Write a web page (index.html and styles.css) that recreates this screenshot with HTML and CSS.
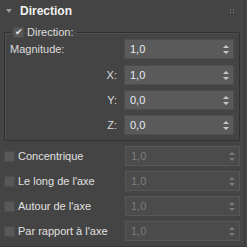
FILE: index.html
```html
<!DOCTYPE html>
<html lang="fr">
<head>
    <meta charset="UTF-8">
    <title>Direction</title>
    <link rel="stylesheet" href="styles.css">
</head>
<body>

<div class="rollout">
    <div class="head">
        <span class="caret"></span>
        <span class="title">Direction</span>
        <span class="grip"></span>
    </div>

    <fieldset class="group">
        <legend><label class="check on"><span class="box">&#10004;</span>Direction:</label></legend>

        <div class="row">
            <span class="lbl">Magnitude:</span>
            <div class="spin"><span class="val">1,0</span><span class="arrows"></span></div>
        </div>
        <div class="row">
            <span class="lbl axis">X:</span>
            <div class="spin"><span class="val">1,0</span><span class="arrows"></span></div>
        </div>
        <div class="row">
            <span class="lbl axis">Y:</span>
            <div class="spin"><span class="val">0,0</span><span class="arrows"></span></div>
        </div>
        <div class="row">
            <span class="lbl axis">Z:</span>
            <div class="spin"><span class="val">0,0</span><span class="arrows"></span></div>
        </div>
    </fieldset>

    <div class="list">
        <div class="row">
            <label class="check"><span class="box"></span>Concentrique</label>
            <div class="spin off"><span class="val">1,0</span><span class="arrows"></span></div>
        </div>
        <div class="row">
            <label class="check"><span class="box"></span>Le long de l'axe</label>
            <div class="spin off"><span class="val">1,0</span><span class="arrows"></span></div>
        </div>
        <div class="row">
            <label class="check"><span class="box"></span>Autour de l'axe</label>
            <div class="spin off"><span class="val">1,0</span><span class="arrows"></span></div>
        </div>
        <div class="row">
            <label class="check"><span class="box"></span>Par rapport à l'axe</label>
            <div class="spin off"><span class="val">1,0</span><span class="arrows"></span></div>
        </div>
    </div>
</div>

</body>
</html>
```

FILE: styles.css
```css
body {
    margin: 0;
    background: #444444;
    font-family: "Liberation Sans", Arial, sans-serif;
    font-size: 11px;
    color: #dcdcdc;
}
.rollout {
    width: 244px;
    height: 246px;
    border-right: 1px solid #383838;
    border-bottom: 1px solid #383838;
}
.head {
    height: 21px;
    display: flex;
    align-items: center;
    padding-left: 6px;
}
.caret {
    width: 0;
    height: 0;
    border-left: 3px solid transparent;
    border-right: 3px solid transparent;
    border-top: 4px solid #9a9a9a;
    margin-right: 8px;
}
.title {
    font-weight: bold;
    font-size: 12px;
    color: #f0f0f0;
    flex: 1;
}
.grip {
    width: 6px;
    height: 6px;
    margin-right: 9px;
    background-image: radial-gradient(circle, #8a8a8a 0.8px, transparent 1px);
    background-size: 3px 3px;
}
.group {
    margin: 5px 4px 0 4px;
    padding: 1px 5px 5px 5px;
    border: 1px solid #303030;
    box-shadow: inset 1px 1px 0 #505050;
    border-radius: 2px;
}
.group legend {
    padding: 0 4px 0 2px;
    margin-left: 1px;
}
.check {
    display: flex;
    align-items: center;
    gap: 3px;
}
.box {
    width: 11px;
    height: 11px;
    box-sizing: border-box;
    background: #585858;
    border: 1px solid #4c4c4c;
    color: #e8e8e8;
    font-size: 9px;
    line-height: 9px;
    text-align: center;
}
.row {
    display: flex;
    align-items: center;
    height: 20px;
    margin-top: 5px;
}
.group .row:first-of-type {
    margin-top: 0;
}
.group .row:nth-of-type(2) {
    margin-top: 6px;
}
.lbl {
    flex: 1;
}
.lbl.axis {
    text-align: right;
    padding-right: 7px;
}
.spin {
    width: 110px;
    height: 20px;
    box-sizing: border-box;
    background: #5a5a5a;
    border: 1px solid #4e4e4e;
    display: flex;
    align-items: center;
    padding-left: 5px;
    color: #e4ecf6;
}
.val {
    flex: 1;
}
.arrows {
    width: 5px;
    height: 9px;
    margin-right: 5px;
    position: relative;
}
.arrows::before,
.arrows::after {
    content: "";
    position: absolute;
    left: 0;
    border-left: 3px solid transparent;
    border-right: 3px solid transparent;
}
.arrows::before {
    top: 0;
    border-bottom: 3px solid #c8c8c8;
}
.arrows::after {
    bottom: 0;
    border-top: 3px solid #c8c8c8;
}
.list {
    padding: 0 4px 0 4px;
}
.list .row {
    justify-content: space-between;
}
.list .check {
    color: #e0e0e0;
}
.spin.off {
    width: 115px;
    background: #4b4b4b;
    border-color: #575757;
    color: #7c7c7c;
}
.spin.off .arrows::before {
    border-bottom-color: #7a7a7a;
}
.spin.off .arrows::after {
    border-top-color: #7a7a7a;
}
```
